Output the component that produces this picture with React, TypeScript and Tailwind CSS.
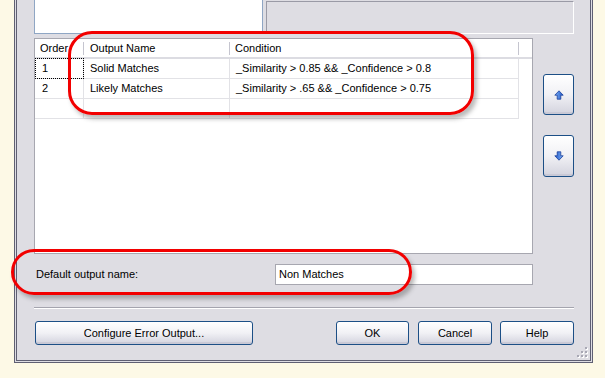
import React from "react";

const font = { fontFamily: '"Liberation Sans", Arial, sans-serif' };

function XPButton({ className, children }: { className?: string; children?: React.ReactNode }) {
  return (
    <div
      className={
        "flex items-center justify-center rounded-[3px] border border-[#1c4f86] bg-gradient-to-b from-white via-[#f1f1f5] to-[#d3d3de] text-[11px] text-black shadow-[inset_0_-2px_0_#c9c9d6] " +
        (className || "")
      }
    >
      {children}
    </div>
  );
}

function Arrow({ down }: { down?: boolean }) {
  return (
    <svg width="10" height="10" viewBox="0 0 10 10" style={{ transform: down ? "rotate(180deg)" : undefined }}>
      <defs>
        <linearGradient id={down ? "gd" : "gu"} x1="0" y1="0" x2="1" y2="0">
          <stop offset="0" stopColor="#7fb2f5" />
          <stop offset="1" stopColor="#1f56c8" />
        </linearGradient>
      </defs>
      <path d="M5 0.8 L9.2 5.2 L6.8 5.2 L6.8 9.2 L3.2 9.2 L3.2 5.2 L0.8 5.2 Z" fill={`url(#${down ? "gd" : "gu"})`} stroke="#1a3f9a" strokeWidth="0.8" strokeLinejoin="round" />
    </svg>
  );
}

export default function App() {
  const rows = [
    ["1", "Solid Matches", "_Similarity > 0.85 && _Confidence > 0.8"],
    ["2", "Likely Matches", "_Similarity > .65 && _Confidence > 0.75"],
    ["", "", ""],
  ];
  return (
    <div className="relative w-[605px] h-[378px] overflow-hidden bg-[#fdf9e6] text-[11px] text-black" style={font}>
      <div className="relative ml-[14px] w-[579px] h-[363px] border-x-[3px] border-b-[3px] border-double border-[#5f5f72] bg-[#dedde3]">
        <div className="flex flex-col pl-[17px] pr-[16px]">
          {/* top panels */}
          <div className="flex h-[34px] gap-[3px]">
            <div className="w-[229px] border-x border-b border-[#8fa6c4] bg-white" />
            <div className="mt-[1px] flex-1 border-l border-t border-[#9a9aa6] border-r-white border-b-white border-r border-b" />
          </div>
          {/* grid row */}
          <div className="mt-[4px] flex gap-[10px]">
            <div className="w-[499px] h-[216px] border border-[#a7a7b0] bg-white">
              <div className="flex h-[20px] border-b-[2px] border-[#dcdce2]">
                <div className="relative w-[49px] overflow-hidden pl-[5px] flex items-center whitespace-nowrap">
                  Order
                  <div className="absolute right-0 top-[3px] bottom-[2px] w-px bg-[#c5c5cf]" />
                </div>
                <div className="relative w-[146px] pl-[6px] flex items-center">
                  Output Name
                  <div className="absolute right-0 top-[3px] bottom-[2px] w-px bg-[#c5c5cf]" />
                </div>
                <div className="relative w-[289px] pl-[5px] flex items-center">
                  Condition
                  <div className="absolute right-0 top-[3px] bottom-[2px] w-px bg-[#c5c5cf]" />
                </div>
              </div>
              {rows.map((r, i) => (
                <div key={i} className="flex h-[20px]">
                  <div className="relative w-[49px] border-r border-b border-[#e2e2e6] pl-[7px] flex items-center">
                    {r[0]}
                    {i === 0 && <div className="absolute left-0 -right-px -top-px -bottom-px border border-dotted border-black" />}
                  </div>
                  <div className="w-[146px] border-r border-b border-[#e2e2e6] pl-[6px] flex items-center">{r[1]}</div>
                  <div className="w-[289px] border-r border-b border-[#e2e2e6] pl-[6px] flex items-center whitespace-nowrap">{r[2]}</div>
                </div>
              ))}
            </div>
            <div className="w-[31px] flex flex-col">
              <XPButton className="mt-[36px] h-[41px]">
                <Arrow />
              </XPButton>
              <XPButton className="mt-[20px] h-[42px]">
                <Arrow down />
              </XPButton>
            </div>
          </div>
          {/* default output row */}
          <div className="mt-[10px] flex h-[21px] items-center">
            <div className="w-[241px] pl-[2px]">Default output name:</div>
            <div className="w-[258px] h-[21px] border border-[#a7a7b0] bg-white pl-[3px] flex items-center">Non Matches</div>
          </div>
          {/* separator */}
          <div className="mt-[22px] h-[2px] border-t border-[#a4a4ae] border-b border-b-white" />
          {/* buttons */}
          <div className="mt-[12px] flex h-[24px]">
            <XPButton className="ml-px w-[218px]">Configure Error Output...</XPButton>
            <XPButton className="ml-auto w-[73px]">OK</XPButton>
            <XPButton className="ml-[9px] w-[74px]">Cancel</XPButton>
            <XPButton className="ml-[8px] w-[74px]">Help</XPButton>
          </div>
        </div>
        {/* resize grip */}
        <svg className="absolute right-[2px] bottom-[2px]" width="11" height="11" viewBox="0 0 11 11">
          {[
            [8, 0], [8, 4], [4, 4], [8, 8], [4, 8], [0, 8],
          ].map(([x, y], i) => (
            <g key={i}>
              <rect x={x + 1} y={y + 1} width="2" height="2" fill="#ffffff" />
              <rect x={x} y={y} width="2" height="2" fill="#a8a8b4" />
            </g>
          ))}
        </svg>
      </div>
      {/* red highlight overlays */}
      <div className="absolute left-[68px] top-[31px] w-[406px] h-[84px] rounded-[24px] border-[3px] border-[#f20000] shadow-[3px_4px_4px_rgba(60,60,60,0.35)]" />
      <div className="absolute left-[11px] top-[249px] w-[401px] h-[46px] rounded-[23px] border-[3px] border-[#f20000] shadow-[3px_4px_4px_rgba(60,60,60,0.35)]" />
    </div>
  );
}
